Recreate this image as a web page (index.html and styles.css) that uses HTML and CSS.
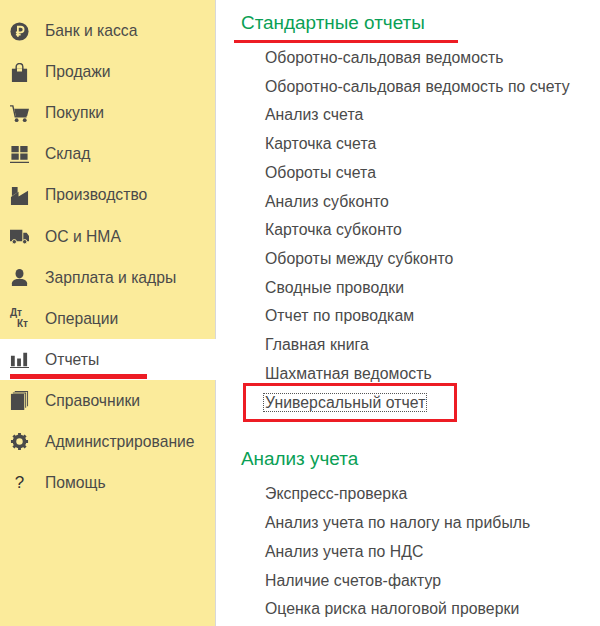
FILE: index.html
```html
<!DOCTYPE html>
<html lang="ru">
<head>
<meta charset="utf-8">
<title>Отчеты</title>
<link rel="stylesheet" href="styles.css">
</head>
<body>
<div class="app">
  <nav class="side">
    <div class="item"><svg class="ico" viewBox="0 0 20 20"><circle cx="10" cy="10" r="9.500" fill="#4a4a4a"/><path d="M8.300 15.500V5h3a3 3 0 0 1 0 6H6.200M6.200 13.200h5" fill="none" stroke="#fbeb9b" stroke-width="1.900"/></svg><span>Банк и касса</span></div>
    <div class="item"><svg class="ico" viewBox="0 0 20 20"><path d="M2 6h16v15H2z" fill="#4a4a4a"/><path d="M6.500 9V4a3.500 3.500 0 0 1 7 0v5" fill="none" stroke="#4a4a4a" stroke-width="1.500"/><path d="M7.300 6h5.400v3h-5.400z" fill="#fbeb9b"/><path d="M6 6h1.300v4H6zM12.700 6H14v4h-1.300z" fill="#4a4a4a"/></svg><span>Продажи</span></div>
    <div class="item"><svg class="ico" viewBox="0 0 20 20"><path d="M0 2h3l2.500 11.500h12" fill="none" stroke="#4a4a4a" stroke-width="1.500"/><path d="M4.500 5H20l-2 7.500H6z" fill="#4a4a4a"/><circle cx="7" cy="17" r="2" fill="#4a4a4a"/><circle cx="15.500" cy="17" r="2" fill="#4a4a4a"/></svg><span>Покупки</span></div>
    <div class="item"><svg class="ico" viewBox="0 0 20 20"><path d="M1.500 1h7.700v6.500H1.500zM10.800 1h7.700v6.500h-7.700zM1.500 9h7.700v6.500H1.500zM10.800 9h7.700v6.500h-7.700zM0 17.500h20V19H0z" fill="#4a4a4a"/></svg><span>Склад</span></div>
    <div class="item"><svg class="ico" viewBox="0 0 20 20"><path d="M2 1h6v5.500l-6 4zM1 11.500l8-5.500v5l10-6v15H1z" fill="#4a4a4a"/></svg><span>Производство</span></div>
    <div class="item"><svg class="ico" viewBox="0 0 20 20"><path d="M0 3h13v12H0zM14 6h3.500L20 9.500V15h-6z" fill="#4a4a4a"/><circle cx="4.500" cy="15.500" r="2.300" fill="#4a4a4a" stroke="#fbeb9b"/><circle cx="15.500" cy="15.500" r="2.300" fill="#4a4a4a" stroke="#fbeb9b"/></svg><span>ОС и НМА</span></div>
    <div class="item"><svg class="ico" viewBox="0 0 20 20"><ellipse cx="10" cy="6" rx="4.200" ry="5" fill="#4a4a4a"/><path d="M2 19v-3q0-3 5-4.500h6q5 1.500 5 4.500v3z" fill="#4a4a4a"/></svg><span>Зарплата и кадры</span></div>
    <div class="item"><span class="dtkt"><b>Дт</b><b class="kt">Кт</b></span><span>Операции</span></div>
    <div class="item active"><svg class="ico" viewBox="0 0 20 20"><path d="M1 6h4v11H1zM7.500 9h4v8h-4zM14 3h4v14h-4zM0 18h20v1H0z" fill="#4a4a4a"/></svg><span>Отчеты</span></div>
    <div class="item"><svg class="ico" viewBox="0 0 20 20"><path d="M5 0h14v16h-1V1H5zM3 1.500h14v16h-1V2.500H3z" fill="#4a4a4a"/><path d="M1 3h14v17H1z" fill="#4a4a4a"/></svg><span>Справочники</span></div>
    <div class="item"><svg class="ico" viewBox="0 0 20 20"><circle cx="10" cy="10" r="5.500" fill="none" stroke="#4a4a4a" stroke-width="3.500"/><path d="M10 1v18M1 10h18M3.600 3.600l12.800 12.800M16.400 3.600L3.600 16.400" stroke="#4a4a4a" stroke-width="3"/><circle cx="10" cy="10" r="3.400" fill="#fbeb9b"/></svg><span>Администрирование</span></div>
    <div class="item"><span class="help">?</span><span>Помощь</span></div>
    <div class="mark-side"></div>
  </nav>
  <main class="content">
    <h2 class="title">Стандартные отчеты</h2>
    <ul class="list">
      <li>Оборотно-сальдовая ведомость</li>
      <li>Оборотно-сальдовая ведомость по счету</li>
      <li>Анализ счета</li>
      <li>Карточка счета</li>
      <li>Обороты счета</li>
      <li>Анализ субконто</li>
      <li>Карточка субконто</li>
      <li>Обороты между субконто</li>
      <li>Сводные проводки</li>
      <li>Отчет по проводкам</li>
      <li>Главная книга</li>
      <li>Шахматная ведомость</li>
      <li><span class="focus">Универсальный отчет</span></li>
    </ul>
    <h2 class="title second">Анализ учета</h2>
    <ul class="list lower">
      <li>Экспресс-проверка</li>
      <li>Анализ учета по налогу на прибыль</li>
      <li>Анализ учета по НДС</li>
      <li>Наличие счетов-фактур</li>
      <li>Оценка риска налоговой проверки</li>
    </ul>
    <div class="mark-title"></div>
    <div class="mark-box"></div>
  </main>
</div>
</body>
</html>
```
FILE: styles.css
```css
html, body { margin: 0; height: 100%; background: #fff; }
body { font-family: "Liberation Sans", Arial, sans-serif; color: #4a4a4a; overflow: hidden; }
.app { display: flex; width: 600px; height: 626px; }
.side { position: relative; box-sizing: border-box; width: 216px; height: 626px; padding-top: 10.500px; background: #fbeb9b; border-right: 1px solid #d8d8d8; flex: none; }
.item { display: flex; align-items: center; height: 41.100px; padding-left: 10px; font-size: 15.700px; }
.item.active { background: #fff; margin-right: -1px; }
.ico { width: 19px; height: 19px; flex: none; margin-right: 16px; }
.dtkt { width: 19px; height: 21px; flex: none; margin-right: 16px; font-size: 10px; line-height: 10.500px; }
.dtkt b { display: block; }
.dtkt .kt { padding-left: 7px; }
.help { width: 19px; flex: none; margin-right: 16px; text-align: center; font-size: 17px; color: #333; }
.mark-side { position: absolute; left: 10px; top: 374px; width: 137px; height: 5px; background: #ed1c24; }
.content { position: relative; flex: 1; padding: 11px 0 0 25px; }
.title { margin: 0; font-size: 18.900px; line-height: 24px; font-weight: 400; color: #0a9f55; }
.second { margin-top: 30px; }
.list { margin: 9px 0 0; padding: 0 0 0 24px; list-style: none; font-size: 15.800px; letter-spacing: 0.050px; }
.lower { margin-top: 9px; }
.list li { height: 28.720px; line-height: 28.720px; }
.focus { outline: 1px dotted #555; padding: 0 1px; margin-left: -1px; }
.mark-title { position: absolute; left: 18px; top: 40px; width: 224px; height: 3px; background: #ed1c24; }
.mark-box { position: absolute; left: 27px; top: 383px; box-sizing: border-box; width: 214px; height: 39px; border: 3px solid #ed1c24; }
```
